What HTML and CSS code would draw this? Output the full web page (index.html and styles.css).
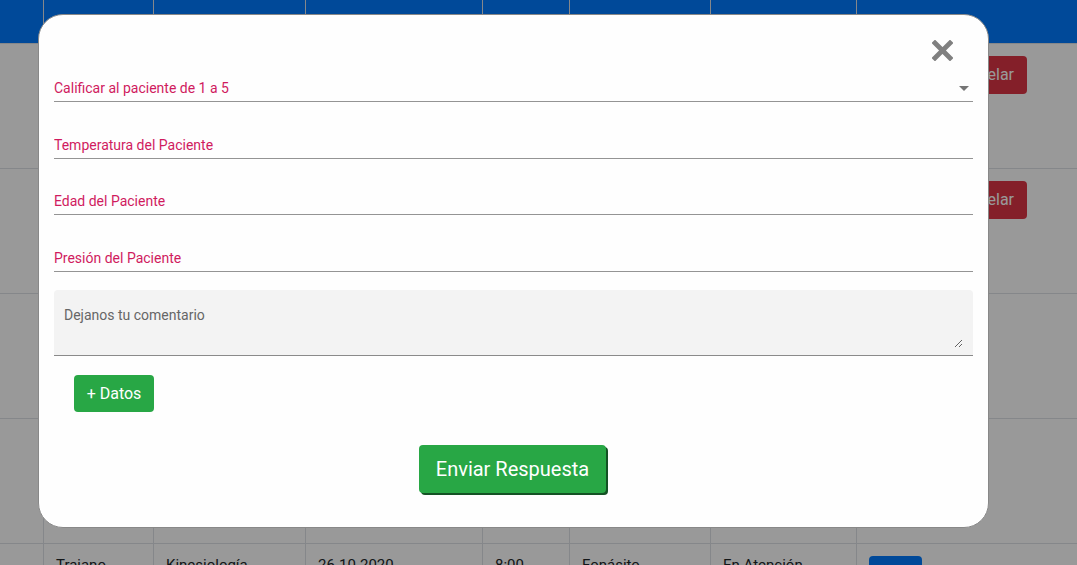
FILE: index.html
```html
<!DOCTYPE html>
<html lang="es">
<head>
<meta charset="utf-8">
<title>Citas</title>
<link rel="stylesheet" href="styles.css">
</head>
<body>
<table class="grid">
  <colgroup>
    <col class="c1"><col class="c2"><col class="c3"><col class="c4"><col class="c5"><col class="c6"><col class="c7"><col class="c8">
  </colgroup>
  <thead>
    <tr><th>#</th><th>Paciente</th><th>Especialidad</th><th>Fecha</th><th>Hora</th><th>Previsión</th><th>Estado</th><th>Acciones</th></tr>
  </thead>
  <tbody>
    <tr><td></td><td>Juan</td><td>Medicina</td><td>24-10-2020</td><td>9:00</td><td>Fonasa</td><td>Pendiente</td><td><div class="acts"><span class="btn btn-blue">Ver</span><span class="btn btn-red">Cancelar</span></div></td></tr>
    <tr><td></td><td>María</td><td>Pediatría</td><td>25-10-2020</td><td>10:00</td><td>Isapre</td><td>Pendiente</td><td><div class="acts"><span class="btn btn-blue">Ver</span><span class="btn btn-red">Cancelar</span></div></td></tr>
    <tr><td></td><td>Pedro</td><td>Dental</td><td>25-10-2020</td><td>11:00</td><td>Fonasa</td><td>Atendido</td><td><div class="acts"><span class="btn btn-blue">Ver</span></div></td></tr>
    <tr><td></td><td>Ana</td><td>Kinesiología</td><td>26-10-2020</td><td>12:00</td><td>Isapre</td><td>Atendido</td><td><div class="acts"><span class="btn btn-blue">Ver</span></div></td></tr>
    <tr><td></td><td>Trajano</td><td>Kinesiología</td><td>26-10-2020</td><td>8:00</td><td>Fonásito</td><td>En Atención</td><td><div class="acts"><span class="btn btn-blue">Ver</span></div></td></tr>
  </tbody>
</table>

<div class="overlay">
  <div class="modal">
    <div class="modal-top">
      <span class="close" aria-label="Cerrar">
        <svg width="21" height="21" viewBox="0 0 21 21"><path d="M3 3 L18 18 M18 3 L3 18" stroke="#808080" stroke-width="4.8" stroke-linecap="square" fill="none"/></svg>
      </span>
    </div>
    <div class="field select">
      <span>Calificar al paciente de 1 a 5</span>
      <svg class="caret" width="10" height="5" viewBox="0 0 10 5"><path d="M0 0 H10 L5 5 Z" fill="#757575"/></svg>
    </div>
    <input class="field" type="text" placeholder="Temperatura del Paciente">
    <input class="field" type="text" placeholder="Edad del Paciente">
    <input class="field" type="text" placeholder="Presión del Paciente">
    <div class="comment-wrap">
      <textarea class="comment" placeholder="Dejanos tu comentario"></textarea>
    </div>
    <div class="row-datos">
      <button class="btn-green btn-datos">+ Datos</button>
    </div>
    <div class="row-send">
      <button class="btn-green btn-send">Enviar Respuesta</button>
    </div>
  </div>
</div>
</body>
</html>
```
FILE: styles.css
```css
html, body {
  margin: 0;
  padding: 0;
  overflow: hidden;
  background: #fff;
}
body {
  font-family: Roboto, "Liberation Sans", Arial, sans-serif;
  color: #212529;
}

/* background table */
.grid {
  width: 1077px;
  border-collapse: separate;
  border-spacing: 0;
  table-layout: fixed;
}
.c1 { width: 44px; }
.c2 { width: 110px; }
.c3 { width: 152px; }
.c4 { width: 177px; }
.c5 { width: 87px; }
.c6 { width: 141px; }
.c7 { width: 146px; }
.c8 { width: 220px; }

.grid th,
.grid td {
  box-sizing: border-box;
  border-right: 1px solid #dee2e6;
  border-bottom: 1px solid #dee2e6;
  text-align: left;
  vertical-align: top;
}
.grid th:last-child,
.grid td:last-child {
  border-right: none;
}
.grid th {
  height: 44px;
  background: #007bff;
  font-weight: 500;
  font-size: 15px;
  padding: 12px;
  color: transparent;
}
.grid td {
  height: 125px;
  padding: 12px;
  font-size: 15px;
  line-height: 18px;
}
.acts {
  display: flex;
  gap: 24px;
}
.btn {
  display: inline-flex;
  align-items: center;
  justify-content: center;
  height: 38px;
  padding: 0 12px;
  border-radius: 4px;
  color: #fff;
  font-size: 16px;
  box-sizing: border-box;
}
.btn-blue {
  background: #007bff;
  width: 53px;
}
.btn-red {
  background: #dc3545;
  width: 81px;
  justify-content: flex-end;
  padding: 0 13px 0 6px;
}

/* modal */
.overlay {
  position: fixed;
  inset: 0;
  background: rgba(0, 0, 0, 0.4);
  padding: 14px 0 0 38px;
}
.modal {
  box-sizing: border-box;
  width: 951px;
  background: #fefefe;
  border: 1px solid #888;
  border-radius: 25px;
  padding: 20px 15px 34px 15px;
  display: flex;
  flex-direction: column;
}
.modal-top {
  height: 30px;
  display: flex;
  justify-content: flex-end;
  align-items: center;
  padding-right: 20px;
}
.close {
  display: block;
  width: 21px;
  height: 21px;
}
.close svg { display: block; }

.field {
  box-sizing: border-box;
  display: block;
  width: 100%;
  height: 37px;
  margin: 0;
  padding: 10px 0 0 0;
  border: none;
  border-bottom: 1px solid #949494;
  background: transparent;
  font-family: Roboto, "Liberation Sans", Arial, sans-serif;
  font-size: 14px;
  line-height: 26px;
  color: #d01b5e;
  outline: none;
}
.field::placeholder {
  color: #d01b5e;
  opacity: 1;
}
input.field {
  margin-top: 19.67px;
}
.select {
  display: flex;
  justify-content: space-between;
  align-items: center;
  padding-right: 4px;
}
.select span { line-height: 26px; }
.caret { display: block; margin-top: 1px; }

.comment-wrap {
  box-sizing: border-box;
  margin-top: 18px;
  height: 66px;
  padding: 0 10px 7px 10px;
  background: #f3f3f3;
  border-bottom: 1px solid #8a8a8a;
  border-radius: 4px 4px 0 0;
}
.comment {
  box-sizing: border-box;
  display: block;
  width: 100%;
  height: 58px;
  margin: 0;
  padding: 15px 0 0 0;
  border: none;
  background: transparent;
  font-family: Roboto, "Liberation Sans", Arial, sans-serif;
  font-size: 14px;
  line-height: 20px;
  color: #555;
  outline: none;
}
.comment::placeholder {
  color: #666;
  opacity: 1;
}

.btn-green {
  box-sizing: border-box;
  background: #28a745;
  color: #fff;
  border: none;
  border-radius: 4px;
  font-family: Roboto, "Liberation Sans", Arial, sans-serif;
  padding: 0;
  cursor: pointer;
}
.row-datos {
  display: flex;
  padding: 19px 0 0 20px;
}
.btn-datos {
  width: 80px;
  height: 37px;
  font-size: 16px;
}
.row-send {
  display: flex;
  justify-content: center;
  padding-top: 33px;
}
.btn-send {
  width: 187px;
  height: 48px;
  margin-right: 2px;
  font-size: 20px;
  box-shadow: 2px 2px 0 #145224;
}
```
